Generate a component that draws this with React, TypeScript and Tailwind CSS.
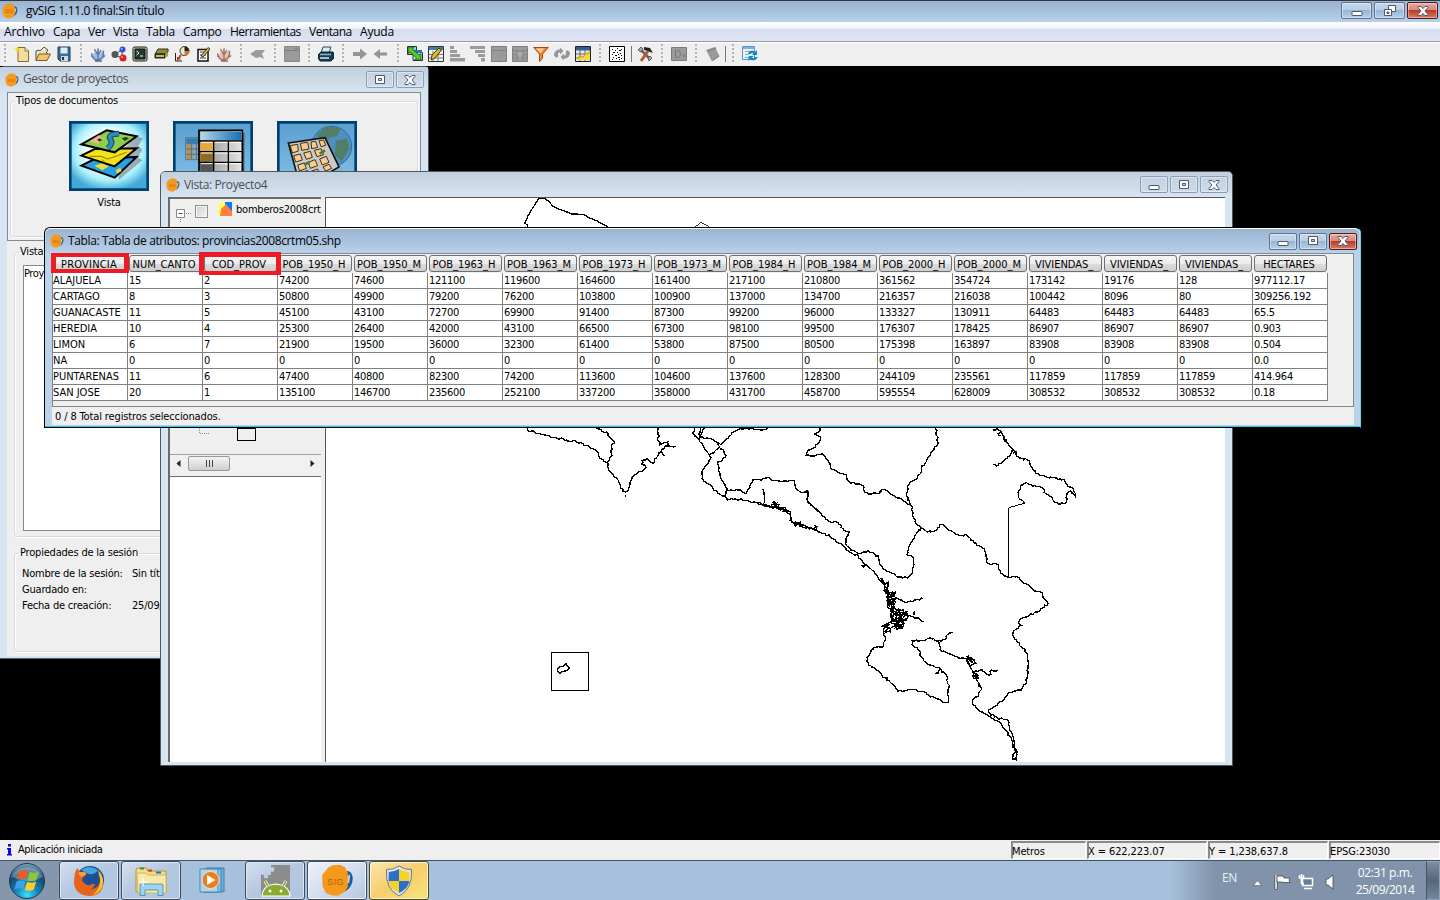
import React from "react";

/* ---------- data ---------- */

const COLUMNS = [
  "PROVINCIA", "NUM_CANTO", "COD_PROV", "POB_1950_H", "POB_1950_M", "POB_1963_H", "POB_1963_M", "POB_1973_H",
  "POB_1973_M", "POB_1984_H", "POB_1984_M", "POB_2000_H", "POB_2000_M", "VIVIENDAS_", "VIVIENDAS_", "VIVIENDAS_", "HECTARES",
];

const ROWS = [
  ["ALAJUELA", "15", "2", "74200", "74600", "121100", "119600", "164600", "161400", "217100", "210800", "361562", "354724", "173142", "19176", "128", "977112.17"],
  ["CARTAGO", "8", "3", "50800", "49900", "79200", "76200", "103800", "100900", "137000", "134700", "216357", "216038", "100442", "8096", "80", "309256.192"],
  ["GUANACASTE", "11", "5", "45100", "43100", "72700", "69900", "91400", "87300", "99200", "96000", "133327", "130911", "64483", "64483", "64483", "65.5"],
  ["HEREDIA", "10", "4", "25300", "26400", "42000", "43100", "66500", "67300", "98100", "99500", "176307", "178425", "86907", "86907", "86907", "0.903"],
  ["LIMON", "6", "7", "21900", "19500", "36000", "32300", "61400", "53800", "87500", "80500", "175398", "163897", "83908", "83908", "83908", "0.504"],
  ["NA", "0", "0", "0", "0", "0", "0", "0", "0", "0", "0", "0", "0", "0", "0", "0", "0.0"],
  ["PUNTARENAS", "11", "6", "47400", "40800", "82300", "74200", "113600", "104600", "137600", "128300", "244109", "235561", "117859", "117859", "117859", "414.964"],
  ["SAN JOSE", "20", "1", "135100", "146700", "235600", "252100", "337200", "358000", "431700", "458700", "595554", "628009", "308532", "308532", "308532", "0.18"],
];

const MENUS: [string, string][] = [
  ["Archivo", "w-[49px] tracking-[-0.15px]"], ["Capa", "w-[35px] tracking-[-0.3px]"], ["Ver", "w-[25px] tracking-[-0.4px]"],
  ["Vista", "w-[33px] tracking-[-0.3px]"], ["Tabla", "w-[37px] tracking-[-0.3px]"], ["Campo", "w-[47px] tracking-[-0.3px]"],
  ["Herramientas", "w-[79px] tracking-[-0.52px]"], ["Ventana", "w-[51px] tracking-[-0.5px]"], ["Ayuda", "w-[40px] tracking-[-0.2px]"],
];

/* ---------- map outlines, in thirds of a pixel ---------- */

const WEST = [
  "82,22 86,34 100,32 110,40 130,44 150,50 170,54 200,60 230,66 250,72 270,84 292,94 296,108 320,128 332,156 354,180 362,206 376,216 386,210 396,174 412,160 438,144 436,136 424,134 430,120 442,116 452,126 460,130 464,116 476,104 486,88 500,76 528,80",
  "290,24 306,34 320,36 332,56 342,64 334,84 336,106 320,128",
  "474,22 474,38 478,48 472,60 480,74 494,68 506,64 500,80 512,78",
  "484,92 490,106 496,106",
  "584,22 578,40 592,52 600,66 612,82 628,104 634,112 622,134 608,150 606,176 612,184 630,194 640,208 664,226 674,228",
  "602,22 596,40 604,52 622,54 640,60 656,68 662,74 680,56 700,36 722,26 770,28 784,30 804,26",
  "614,24 604,40 596,58",
  "656,68 656,86 634,100 628,104",
  "662,84 672,96 678,106 668,120 654,124 658,156 668,184 682,210 700,212 720,210 738,220 750,204 758,180 784,180 802,172 812,178 840,184 884,184 890,208 904,218 924,214 924,244 960,276",
  "684,208 674,228 682,240 704,236 740,242 776,252 800,258 830,264 856,272 870,282 874,306 900,312 930,322 960,336",
  "788,208 792,222 794,240 790,252", "820,244 832,256 824,262 844,268", "880,306 886,320 900,306 898,320", "944,316 946,332 952,318",
];

const EAST = [
  "60,22 56,36 44,42 62,52 56,68 40,84 26,90 18,106 44,108 66,100 78,116 90,130 94,148 110,154 140,164 144,182 166,192 188,196 194,216 214,222 236,220 248,208 262,212 276,224 300,234 310,244 334,258",
  "406,22 410,46 414,72 392,104 366,138 362,160 342,180 322,198 320,228 334,258 338,288 350,312 362,322 382,336 410,330 418,314 430,314 442,328 478,346 500,346 528,370 552,386 558,408 562,428 594,434 602,460 626,472",
  "362,322 348,342 336,366 326,380 320,404 338,410 342,434 338,454 322,474 290,470 270,456 250,446 238,430 234,408 204,392 190,396 176,400 150,386 138,374 140,352 148,336 132,332 116,308 90,306 60,278 22,246 24,216 0,218",
  "588,26 606,42 616,62 640,90 656,112 688,122 694,140 708,160 740,172 792,178 802,198 820,206 826,228 812,212 802,218 800,248 782,252 764,246 752,230 738,222 724,202 698,198 680,188 662,196 654,218 660,238 674,250",
  "580,30 590,26 604,34 594,42 604,48", "640,88 632,104 616,118 604,130 590,138 580,132", "634,92 652,96 640,100", "608,58 620,58 612,66",
  "626,472 652,470 664,482 684,494 702,512 728,520 734,538 744,552 726,564 718,574 688,586 660,598 654,606 664,616 654,626 640,634 638,646 652,666 676,688 682,712 684,744 680,784 664,810 628,818 612,838 588,858 566,870 570,880 598,898 606,894 624,902 630,932 640,950 642,980 652,996 648,1020 638,1018 642,1000 648,992",
  "0,318 44,330 90,350 128,376 150,398 176,408 190,428 212,446 236,476 254,494 262,508 262,540 274,562 276,592 292,612 306,620",
  "190,428 196,436 186,438 192,444",
  "284,536 304,540 320,548 344,540 370,536", "322,586 340,590 356,594 370,606", "342,586 346,572",
  "270,612 256,618 250,632 256,650 250,680 220,682 208,702 200,724 206,736 220,742 244,762 272,788 294,814 330,808 360,814 388,826 436,848 446,842 442,822 448,796 438,762 418,744 380,730 364,712 358,692 336,674 336,662 368,662 390,654 416,662 420,690 440,698 464,708 488,714 500,716 504,732 520,760 528,776 544,806 536,826 518,840 518,854 540,874 570,890 598,906 618,932 634,958 644,990 652,1004",
  "416,662 436,658 442,644 460,636", "498,708 514,714 528,730 512,738 500,716 518,728 506,704", "520,756 540,750 556,758 568,766 574,750 594,752", "420,746 414,760 404,760",
  "516,768 534,766 522,756 536,774 520,774 530,760",
];

/* tangle of channels at the delta */
const DELTA = [
  "240,476 256,500 262,520 264,552 276,580", "246,480 264,494 258,520 272,540 268,560", "260,520 286,520 270,532 290,536 268,548 284,552 270,566",
  "272,540 280,570 290,590 296,624", "270,576 300,570 288,584 322,580 300,592 318,596 280,604 312,610 284,616 308,624 274,622",
  "280,560 294,572 304,586 310,604 306,626", "272,580 278,600 264,612 248,618 270,626 254,634 272,638", "294,566 320,576 312,590 326,588 316,604",
  "266,510 270,530 278,518 274,556 266,540", "284,580 276,610 298,606 302,590 290,600 286,622 306,614",
];

const HARBOUR = ["776,250 800,256 826,262 850,270 872,278", "812,256 836,262 862,276", "818,246 838,254 828,266 856,264 850,274 868,272", "866,300 876,306 890,312 904,314"];

function rough(points: string, amount: number): string {
  const pts = points.split(" ").map((p) => p.split(",").map(Number));
  let seed = pts[0][0] * 31 + pts[0][1] * 17 + pts.length;
  const rnd = () => {
    seed = (seed * 1103515245 + 12345) % 2147483648;
    return seed / 2147483648 - 0.5;
  };
  const out: string[] = [pts[0].join(",")];
  for (let i = 1; i < pts.length; i++) {
    const [x0, y0] = pts[i - 1];
    const [x1, y1] = pts[i];
    const n = Math.max(1, Math.round(Math.hypot(x1 - x0, y1 - y0) / 6));
    for (let k = 1; k < n; k++) {
      const t = k / n;
      out.push(`${(x0 + (x1 - x0) * t + rnd() * amount).toFixed(1)},${(y0 + (y1 - y0) * t + rnd() * amount).toFixed(1)}`);
    }
    out.push(`${x1},${y1}`);
  }
  return out.join(" ");
}

function CostaRicaMap() {
  return (
    <svg width="899" height="565" viewBox="326 198 899 565" className="block" fill="none" stroke="#000" shapeRendering="crispEdges">
      <g strokeWidth="4">
        <g transform="translate(510 170) scale(.33333)">
          <polyline points="54,170 52,164 44,160 54,138 64,120 76,102 86,86 104,86 114,92 130,110 148,118 166,124 186,132 222,133 234,142 260,152 280,164 294,171" />
          <path d="M556 170l18-13 22 13" strokeWidth="3" stroke="#333" />
        </g>
        <g transform="translate(500 420) scale(.33333)">
          {WEST.map((p, i) => <polyline key={i} points={rough(p, 6)} />)}
          {HARBOUR.map((p, i) => <polyline key={i} points={rough(p, 9)} />)}
          <path d="M375 228h3" />
          <path d="M154 697h112v114h-112z" strokeWidth="3" />
          <path d="M176 742l14-4 8-7 4 6 5 4 0 6-8 5-12 3-6 5-6-3-3-9z" />
        </g>
        <g transform="translate(800 420) scale(.33333)">
          {EAST.map((p, i) => <polyline key={i} points={rough(p, 6)} />)}
          {DELTA.map((p, i) => <polyline key={i} points={rough(p, 12)} />)}
          <path d="M674 250l-48 13v210" strokeWidth="3" />
        </g>
      </g>
    </svg>
  );
}

/* ---------- icons ---------- */

function Logo({ className = "" }: { className?: string }) {
  return (
    <svg viewBox="0 0 16 16" className={`shrink-0 ${className}`}>
      <path d="M11.500 3.500c2-.5 3.500.5 3.800 2.500S15 12 11 13.500z" fill="#1d5f9e" />
      <path d="M12 6.500l2.200-1.500-.5 4-1.700 1z" fill="#c9d6e4" />
      <path d="M3.500 1.700L6 .5h3.500l2.300 1.200L13 4.500v6.500l-1.500 2.500-3 1.800H5.500L2.300 14 .8 10.800.5 5.500z" fill="#f5991d" />
      <text x="3" y="10" fontSize="4.500" fontFamily="Liberation Sans" fill="#b06410" textLength="8">SIG</text>
    </svg>
  );
}

const G = "#9b9b9b";

const ICONS: Record<string, React.ReactNode> = {
  new: <><path d="M4 1.500h7l3.500 3.500v10.500H4z" fill="#f3dc9c" stroke="#8a6a2c" /><path d="M11 1.500V5h3.500" fill="#fff7da" stroke="#8a6a2c" /><path d="M3 0l1 2.500 3 .5-3 1L3 7 2 4-1 3l3-.5z" fill="#f4e022" /></>,
  open: <><path d="M1 5l3-1 1 1 4-4 4 3-2 3 2 1-3 6.500H1z" fill="#e9e3d2" stroke="#5c5138" /><path d="M4 8h11.500L12 14.500H1z" fill="#f0c56c" stroke="#7a5c22" /></>,
  save: <><path d="M2 1h12v14H4l-2-2z" fill="#3c6d93" stroke="#1d3c58" /><path d="M4.500 1.500h7v6h-7z" fill="#dfeaf2" /><path d="M5 10h7v5H5z" fill="#cfd8df" /><path d="M6 11h2v3H6z" fill="#234" /></>,
  coral: <><path d="M1 7l3 1 1-5 2 4 1-6 2 6 4-4-1 5 3 1-3 4-4 3H6l-3-3z" fill="#a9bbdc" /><path d="M8 14C4 14 2 11 1.500 7.500M8 14V2.500M8 14c4-1 6-4 5.500-9M8 9L4.500 3M8 9l3-5M4 11L1 10M12 11l3-1M5 15h7" stroke="#5b74a6" strokeWidth="1.300" /></>,
  molecule: <><path d="M4 9l7-6v9z" stroke="#444" /><circle cx="11.500" cy="3.500" r="3" fill="#2b50c8" /><circle cx="4" cy="8.500" r="3.500" fill="#555" /><circle cx="12" cy="12" r="3.500" fill="#d92323" /><circle cx="11" cy="11" r="1" fill="#f6a0a0" /><circle cx="10.700" cy="2.700" r="1" fill="#a9c0f4" /></>,
  console: <><rect x="1" y="1" width="14" height="14" rx="1.500" fill="#bfc6bd" stroke="#222" /><path d="M3 3h10v10H3z" fill="#24382c" stroke="#111" /><path d="M4.500 5l2.500 2-2.500 2M8 10h3" stroke="#dfe" /></>,
  book: <><path d="M5 3h10v3l-3 2H2z" fill="#8d8c28" stroke="#333" /><path d="M2 8h10v4H2z" fill="#3d3c10" stroke="#222" /><path d="M3 10h8" stroke="#e8e49a" strokeWidth="1.500" /><path d="M12 8l3-2v4l-3 2z" fill="#a5a438" /></>,
  pie: <><path d="M1.500 7v8H8" stroke="#222" /><path d="M3 11h1.500v3.500H3z" fill="#d22" /><path d="M5 9h1.500v5.500H5z" fill="#e08020" /><circle cx="10.500" cy="5" r="4.500" fill="#f1ead6" stroke="#333" /><path d="M10.500 5V.5A4.500 4.500 0 0 1 15 5z" fill="#222" /><path d="M10.500 5l4.500 0a4.500 4.500 0 0 1-4.500 4.500z" fill="#e07a20" /><path d="M7 9l-3 4" stroke="#a33" strokeWidth="1.500" /></>,
  edit: <><path d="M3 3.500h10v11.500H3z" fill="#fff" stroke="#111" strokeWidth="1.500" /><path d="M5 6h4M5 9h6M5 12h6" stroke="#333" /><path d="M6 10l7-8.500 2 1.500-7 8z" fill="#e2b934" stroke="#111" strokeWidth=".8" /></>,
  coral2: <><path d="M1 7l3 1 1-5 2 4 1-6 2 6 4-4-1 5 3 1-3 4-4 3H6l-3-3z" fill="#e2c3b8" /><path d="M8 14C4 14 2 11 1.500 7.500M8 14V2.500M8 14c4-1 6-4 5.500-9M8 9L4.500 3M8 9l3-5M4 11L1 10M12 11l3-1M5 15h7" stroke="#a26c5e" strokeWidth="1.300" /></>,
  bird: <path d="M0 8l6-4h9l-3 4 2 5-4-2-4 1z" fill={G} />,
  win: <><path d="M.5.500h15v15H.5z" fill={G} stroke="#888" /><path d="M1 4.500h14M11 2.500h3" stroke="#7d7d7d" /></>,
  printer: <><path d="M5 1h8l-2 6H3z" fill="#d6ecf4" stroke="#345" /><path d="M0 9l3-3h12l1 3v3l-3 3H2l-2-3z" fill="#123c58" stroke="#0b2233" /><path d="M2 8.500h11" stroke="#8fb5c8" strokeWidth="1.500" /><path d="M2 12h9" stroke="#dfe9ee" strokeWidth="1.500" /></>,
  right: <path d="M1 6h7V2.500l7 5.500-7 5.500V10H1z" fill="#949494" />,
  left: <path d="M14 6.500H7V3L.5 8 7 13V9.500h7z" fill="#949494" />,
  link: <><path d="M.5.500h9v8h-9z" fill="#9fc7de" stroke="#234" /><path d="M6 6.500h9.500v8H6z" fill="#cfe0ea" stroke="#234" /><path d="M6 4h9v3H6z" fill="#2f78a8" /><path d="M1 1h6L5.500 3l6.500 6 2-1.500V14H7.500l2-2L3 6 1 7.500z" fill="#57c927" stroke="#174d0c" strokeWidth=".8" /></>,
  tedit: <><path d="M.5.500h15v15H.5z" fill="#f4f4f4" stroke="#333" /><path d="M1 1h14v3H1z" fill="#3f80ac" /><path d="M1 8.500h14M1 12h14M5 5v10M10 5v10" stroke="#777" /><path d="M3 14l1-5 7-7 2.500 2L7 12z" fill="#d8bd25" stroke="#463b08" /></>,
  asc: <path d="M1 0h4v3H1zM1 4h7v3H1zM1 8h10v3H1zM1 12h15v3.500H1z" fill={G} />,
  desc: <path d="M0 0h15v3H0zM5 4h10v3H5zM8 8h7v3H8zM11 12h4v3.500h-4z" fill={G} />,
  gt: <><path d="M.5.500h15v15H.5z" fill={G} stroke="#7f7f7f" /><path d="M1 4.500h14" stroke="#838383" /><path d="M5 9l3 3 5-6" stroke="#8d8d8d" /></>,
  gt2: <><path d="M.5.500h15v15H.5z" fill={G} stroke="#7f7f7f" /><path d="M1 4.500h14M1 8.500h14M1 12h14M5 5v10M11 5v10" stroke="#858585" /><path d="M8 12V7M5.500 9L8 6.500 10.500 9" stroke="#b0b0b0" strokeWidth="1.500" /></>,
  funnel: <><path d="M.7 1.500h14.600L9.500 8v4.500L6.500 15.500V8z" fill="#f18a3c" stroke="#a8480f" /><path d="M3 2.500h8L7.500 7z" fill="#ffd0a0" /></>,
  refreshg: <g fill="#979797"><path d="M0 9.500C0 5.500 3 3 6 3.500V1.500l3.500 3.500L6 8.500V6.500C4 6.300 3.500 8 4.500 10l-2 2z" /><path d="M16 6.500c0 4-3 6.500-6 6v2L6.500 11 10 7.500v2c2 .2 2.500-1.500 1.500-3.500l2-2z" /></g>,
  chart: <><path d="M.5.500h15v15H.5z" fill="#e9e9e9" stroke="#222" /><path d="M1 1h14v3.500H1z" fill="#2c5f96" /><path d="M1 8h14M1 12h14M5 4v11M10 4v11" stroke="#666" /><path d="M2 13l4-2 2 1 3-5 2 2 2-4v9H2z" fill="#f2dc36" /><path d="M2 12l4-2 2 1 3-4 2 1 2-4" stroke="#e08a20" /></>,
  pattern: <><path d="M.5.500h15v15H.5z" fill="#fff" stroke="#000" /><path d="M3 3h1v1H3zM6 4h1v1H6zM8 2h1v1H8zM10 4h2v1h-2zM12 3h1v1h-1zM4 6h2v1H4zM8 6h1v1H8zM11 7h1v1h-1zM3 8h1v1H3zM6 9h2v1H6zM9 8h1v1H9zM12 9h1v1h-1zM4 11h1v1H4zM7 12h1v1H7zM9 11h2v1H9zM12 12h1v1h-1zM3 13h1v1H3zM10 13h1v1h-1z" fill="#000" /></>,
  tools: <><path d="M3 3l10 10" stroke="#666" strokeWidth="2.500" /><path d="M1 4l3-3 2 2-2 3zM12 15l3-3-2-2-2 2z" fill="#aaa" stroke="#333" strokeWidth=".7" /><path d="M11 5L4 15" stroke="#b4592a" strokeWidth="3" /><path d="M7 1l6 1 3 5-3-1-2-1-4-1z" fill="#222" /></>,
  dbox: <><path d="M.5 1.500h15v13H.5z" fill={G} stroke="#7b7b7b" /><path d="M4.500 4.500h2q3 0 3 3.500t-3 3.500h-2zM11 9h3l-2 3" stroke="#777" /></>,
  eraser: <><path d="M1 4l9-3 4.500 9L7 15.500z" fill="#9a9a9a" /><path d="M3 5l8-3M8 14l6-4" stroke="#858585" strokeWidth="1.500" /></>,
  sync: <><path d="M.5.500h12v13H.5z" fill="#e9f1fa" stroke="#5b94c8" /><path d="M1 1h11v2H1z" fill="#7fb0de" /><path d="M3 5.500h7M3 8.500h4M3 11.500h3" stroke="#8cb88c" /><path d="M6 8c1-4 5-4 7-2l2-2v5h-5l1.500-1.500C10 6.500 9 7 8.500 8zM15.500 11c-1 4-5 4-7 2l-2 2v-5h5L10 11.500c1.500 1 2.500.5 3-.5z" fill="#1289c4" /></>,
};

const TOOLBAR = [
  "|", "new", "open", "save", "|", "coral", "molecule", "console", "book", "pie", "edit", "coral2", "|", "bird", "|", "win", "|", "printer",
  "|", "right", "left", "|", "link", "tedit", "asc", "desc", "gt", "gt2", "funnel", "refreshg", "chart", "|", "pattern", "/", "tools",
  "|", "dbox", "|", "eraser", "/s", "|", "sync",
];

function Toolbar() {
  return (
    <div className="-ml-[1.5px] flex h-6 items-center border-t border-white bg-[#efefef] pb-px">
      {TOOLBAR.map((name, i) => {
        if (name === "|")
          return (
            <span key={i} className="flex w-[13px] justify-center">
              <svg width="2" height="20"><path d="M1 0v20" stroke="#b4b4b4" strokeWidth="2" strokeDasharray="2 2" /></svg>
            </span>
          );
        if (name[0] === "/")
          return (
            <span key={i} className={name === "/" ? "flex w-[7px] justify-center" : "flex w-[3px] justify-center"}>
              <span className="h-4 w-px bg-[#777]" />
            </span>
          );
        return (
          <span key={i} className="flex w-[21px] justify-center">
            <svg width="16" height="16" viewBox="0 0 16 16" fill="none">{ICONS[name]}</svg>
          </span>
        );
      })}
    </div>
  );
}

/* ---------- window buttons ---------- */

function Glyph({ kind }: { kind: string }) {
  return (
    <svg width="14" height="12" viewBox="0 0 14 12" fill="#fff" stroke="#50566b">
      {kind === "min" && <rect x="2" y="6.500" width="10" height="4" rx=".5" />}
      {kind === "max" && <path d="M2.500 1.500h9v8h-9zM5.500 4.500h3v2h-3z" fillRule="evenodd" />}
      {kind === "restore" && <><path d="M5.500.500h7v6h-7z" /><path d="M1.500 4.500h7v6h-7zM4 7h2v1.500H4z" fillRule="evenodd" /></>}
      {kind === "close" && <path d="M2 1.500h3l2 2 2-2h3v1L9 6l3 3.500v1H9l-2-2-2 2H2v-1L5 6 2 2.500z" />}
    </svg>
  );
}

function WinButton({ kind, tone, wide }: { kind: string; tone: string; wide?: boolean }) {
  const tones: Record<string, string> = {
    off: "border-[#8e9db5] bg-gradient-to-b from-[#c3d2e2] to-[#ccdbe9]",
    on: "border-[#5f7390] bg-[linear-gradient(#c5d8eb_0%,#b7cde4_48%,#98b6d3_50%,#b4cfe8_100%)]",
    red: "border-[#4d1a22] bg-[linear-gradient(#e9aa9e_0%,#db8777_48%,#b93d25_50%,#d77a62_100%)]",
  };
  return (
    <span className={`flex items-center justify-center rounded-[2px] border shadow-[inset_0_0_0_1px_rgba(255,255,255,0.4)] ${wide ? "h-[17px] w-[31px]" : "h-[17px] w-7"} ${tones[tone]}`}>
      <Glyph kind={kind} />
    </span>
  );
}

const SEGOE = "font-['Open_Sans',sans-serif] text-[12px]";
const TAHOMA = "font-['DejaVu_Sans_Condensed','DejaVu_Sans',sans-serif] text-[11px]";

function GroupBox({ title, className, children }: { title: string; className: string; children?: React.ReactNode }) {
  return (
    <fieldset className={`min-w-0 rounded-[3px] border border-[#cfdce8] shadow-[inset_1px_1px_0_#fff,1px_1px_0_#fff] ${className}`}>
      <legend className="ml-[4px] h-3 px-px leading-3 tracking-[-0.2px] whitespace-nowrap">{title}</legend>
      {children}
    </fieldset>
  );
}

/* ---------- project manager ---------- */

function LayersPicture() {
  return (
    <svg width="80" height="70" viewBox="0 0 240 210" className="block">
      <defs>
        <radialGradient id="lg" cy=".42" r=".62"><stop offset=".45" stopColor="#fff" /><stop offset=".75" stopColor="#a6f0fa" /><stop offset="1" stopColor="#43a9d8" /></radialGradient>
      </defs>
      <path d="M0 0h240v210H0z" fill="#00406f" />
      <path d="M8 8h224v194H8z" fill="url(#lg)" />
      <path d="M150 176l70-58-14-10 14-22-12-12 14-22-20-6-60 60z" fill="#667" opacity=".5" />
      <path d="M37 134l40-20 126-6-66 62z" fill="#27a0e4" stroke="#000" strokeWidth="6" />
      <path d="M76 134l24-8 20 10-20 12zM140 148l14-8 4 10-14 8z" fill="#e8dc36" />
      <path d="M37 104l40-20 126-2-66 54z" fill="#f3e11c" stroke="#000" strokeWidth="6" />
      <path d="M62 106l34 0 20 8 30-10 26-10M100 116l10 10" stroke="#8a7a08" strokeWidth="3" fill="none" />
      <path d="M37 70l76-42 90 18-66 48z" fill="#8bd04c" stroke="#000" strokeWidth="6" />
      <path d="M62 60l28-18 12 12-14 14z" fill="#f0b98c" />
      <path d="M84 56l8-4 8 4-8 6zM158 52l12-4 10 4-12 8z" fill="#2d3a20" />
      <path d="M150 38q-36 2-26 16t-8 28" stroke="#123f66" strokeWidth="17" fill="none" />
      <path d="M150 38q-36 2-26 16t-8 28" stroke="#2b8cc4" strokeWidth="11" fill="none" />
    </svg>
  );
}

function TablePicture() {
  return (
    <svg width="80" height="70" viewBox="0 0 240 210" className="block">
      <defs>
        <linearGradient id="tg" x2="0" y2="1"><stop stopColor="#5a9fd0" /><stop offset="1" stopColor="#87c2e8" /></linearGradient>
        <linearGradient id="th"><stop stopColor="#b8d6ea" /><stop offset="1" stopColor="#1272b4" /></linearGradient>
        <linearGradient id="tc"><stop stopColor="#8c8c8c" /><stop offset="1" stopColor="#e4e4e4" /></linearGradient>
      </defs>
      <path d="M0 0h240v210H0z" fill="#00406f" />
      <path d="M8 8h224v194H8z" fill="url(#tg)" />
      <path d="M38 50h46v66H38z" fill="#8fa6b4" stroke="#5d7688" strokeWidth="3" />
      <path d="M40 52h44v14H40z" fill="#2d80b8" />
      <path d="M42 70h12v44H42z" fill="#b99245" />
      <path d="M40 68h40M40 84h40M40 100h40M56 68v46M70 68v46" stroke="#4f7186" strokeWidth="3" />
      <path d="M86 36h128v174H86z" fill="#345b76" />
      <path d="M78 28h130v190H78z" fill="url(#tc)" stroke="#000" strokeWidth="5" />
      <path d="M82 32h122v26H82z" fill="url(#th)" />
      <path d="M82 64h38v26H82z" fill="#e6a93c" /><path d="M82 94h38v28H82z" fill="#8d6d22" /><path d="M82 126h38v30H82z" fill="#555" />
      <path d="M78 60h130M78 92h130M78 124h130M122 60v120M166 60v120" stroke="#000" strokeWidth="4" />
      <path d="M84 64h34M126 64h38M170 64h34M84 96h34M126 96h38M170 96h34M84 128h34M126 128h38M170 128h34" stroke="#fff" strokeWidth="3" />
    </svg>
  );
}

function MapPicture() {
  return (
    <svg width="80" height="70" viewBox="0 0 240 210" className="block">
      <path d="M0 0h240v210H0z" fill="#00406f" />
      <path d="M8 8h224v194H8z" fill="url(#tg)" />
      <circle cx="164" cy="76" r="60" fill="#4f8fc0" stroke="#2f6c9c" strokeWidth="3" />
      <path d="M120 40l30-24 40 6-10 24-24 4-10 20-20-6zM176 60l34-8 8 30-24 40-20-20z" fill="#4f7f68" />
      <path d="M34 66l110-16 42 88-114 66z" fill="#c9c9c6" stroke="#111" strokeWidth="5" />
      <g fill="#fbcb8c" stroke="#3a2f20" strokeWidth="3">
        <path d="M40 74l22-4 2 20-18 6zM70 67l22-3 4 20-22 4zM102 63l14-2 6 18-18 4zM126 59l14-2 6 16-14 4zM50 104l20-5 6 18-20 6zM80 96l20-5 6 18-18 6zM112 88l20-5 8 18-20 6zM62 132l20-6 6 16-20 8zM94 124l20-8 8 18-22 8zM128 114l20-8 8 18-20 8zM104 150l18-6 6 14-20 8zM138 138l18-8 8 12-18 8zM72 156l20-8 6 14-20 8z" />
      </g>
      <path d="M84 130l14-6M128 98l16-10" stroke="#4d7a33" strokeWidth="8" />
    </svg>
  );
}

function ProjectManager() {
  return (
    <section className={`absolute top-0 left-0 flex h-[593px] w-[429px] flex-col rounded-t-[5px] border-t border-r border-b border-[#50575f] bg-[#d7e4f1] pb-[2px] text-black ${TAHOMA}`}>
      <header className="flex h-[25px] shrink-0 items-center bg-gradient-to-b from-[#c2cfdc] to-[#d8e5f1] pr-[4px] pl-[5px]">
        <Logo className="size-[14px]" />
        <span className={`ml-1 flex-1 pb-px tracking-[-0.42px] text-[#4b4f55] ${SEGOE}`}>Gestor de proyectos</span>
        <div className="flex gap-0.5"><WinButton kind="max" tone="off" /><WinButton kind="close" tone="off" /></div>
      </header>
      <div className="mr-[7px] ml-[7px] flex min-h-0 flex-1 flex-col border-l border-[#efefef] bg-[#efefef]">
        <div className="-ml-px h-[149px] shrink-0 border border-[#828790] px-[2px] pt-[2px]">
          <GroupBox title="Tipos de documentos" className="h-[142px]">
            <div className="ml-[58px] flex gap-6 pt-[14px]">
              <div className="flex flex-col items-center">
                <LayersPicture />
                <span className="mt-1 tracking-[-0.2px]">Vista</span>
              </div>
              <TablePicture />
              <MapPicture />
            </div>
          </GroupBox>
        </div>
        <div className="mt-[5px] flex-1 pr-1 pl-[6px]">
          <GroupBox title="Vista" className="h-[291px]">
            <div className="mt-[7px] ml-[8px] h-[266px] w-[380px] border border-[#828790] bg-white tracking-[-0.4px]">Proyecto4</div>
          </GroupBox>
          <GroupBox title="Propiedades de la sesión" className="mt-[10px] h-[105px]">
            <dl className="mt-[7px] ml-[7px] grid grid-cols-[110px_1fr] leading-4 tracking-[-0.2px]">
              <dt>Nombre de la sesión:</dt><dd>Sin título</dd>
              <dt>Guardado en:</dt><dd />
              <dt>Fecha de creación:</dt><dd>25/09/2014</dd>
            </dl>
          </GroupBox>
        </div>
      </div>
    </section>
  );
}

/* ---------- view window ---------- */

function ViewWindow() {
  return (
    <section className="absolute top-[105px] left-[160px] flex h-[595px] w-[1073px] flex-col rounded-t-[5px] border border-[#50575f] bg-[#d7e4f1]">
      <header className="flex h-[25px] shrink-0 items-center rounded-t-[4px] bg-gradient-to-b from-[#c2cfdc] to-[#d8e5f1] pr-[4px] pl-[5px]">
        <Logo className="size-[14px]" />
        <span className={`ml-1 flex-1 tracking-[-0.38px] text-[#4b4f55] ${SEGOE}`}>Vista: Proyecto4</span>
        <div className="flex gap-0.5"><WinButton kind="min" tone="off" /><WinButton kind="max" tone="off" /><WinButton kind="close" tone="off" /></div>
      </header>
      <div className="mr-[7px] ml-[7px] flex h-[565px] bg-[#efefef]">
        <div className="flex w-[153px] shrink-0 flex-col border-t-2 border-l-2 border-[#6b6b6b]">
          <div className={`flex h-[256px] shrink-0 flex-col justify-between bg-[#efefef] ${TAHOMA}`}>
            <div className="flex h-[24px] items-center pl-[6px]">
              <svg width="19" height="24" viewBox="0 0 19 24" fill="none" className="shrink-0"><path d="M.5 10.500h8v8h-8z" fill="#fff" stroke="#888" /><path d="M2.500 14.500h4" stroke="#34508c" /><path d="M10 14.500h6M4.500 20v4" stroke="#888" strokeDasharray="1 1" /></svg>
              <span className="size-[13px] shrink-0 border border-[#8e8f8f] bg-gradient-to-br from-[#cbcfd5] to-[#f6f6f6] shadow-[inset_0_0_0_1px_#f4f4f4]" />
              <svg width="14" height="14" viewBox="0 0 14 14" className="mb-1 ml-[10px] shrink-0"><path d="M0 0h14v14H0z" fill="#ffff73" /><path d="M7 0h7v14H7z" fill="#0080ff" /><path d="M2 14l1-7 5-5 3 4 3 3v5z" fill="#ff7f3f" /></svg>
              <span className="ml-1 w-[86px] overflow-hidden pb-[2px] tracking-[-0.22px] whitespace-nowrap">bomberos2008crt</span>
            </div>
            <div className="flex h-[27px] items-start border-b border-[#a0a0a0] pl-[28px]">
              <svg width="12" height="9"><path d="M1.500 0v5.500H12" fill="none" stroke="#888" strokeDasharray="1 1" /></svg>
              <span className="ml-[27px] h-[13px] w-[19px] border border-black" />
            </div>
          </div>
          <div className="flex h-[17px] shrink-0 items-center justify-between bg-[#f1f1f1] px-[6px]">
            <svg width="5" height="8"><path d="M4.500 0v7L.5 3.500z" fill="#222" /></svg>
            <span className="mr-auto ml-[7px] flex h-[15px] w-[42px] items-center justify-center gap-[2px] rounded-[2px] border border-[#979797] bg-gradient-to-b from-[#f4f4f4] to-[#cfcfcf]">
              <i className="h-[7px] w-px bg-[#444]" /><i className="h-[7px] w-px bg-[#444]" /><i className="h-[7px] w-px bg-[#444]" />
            </span>
            <svg width="5" height="8"><path d="M.5 0v7l4-3.500z" fill="#222" /></svg>
          </div>
          <div className="mt-[4px] flex-1 border-t border-[#6b6b6b] bg-white" />
        </div>
        <div className="ml-[4px] flex-1 overflow-hidden border-t border-l border-[#555] bg-white"><CostaRicaMap /></div>
      </div>
    </section>
  );
}

/* ---------- attribute table ---------- */

function AttributeTable() {
  return (
    <section className="absolute top-[161px] left-[44px] h-[201px] w-[1317px] rounded-t-[6px] border border-black border-r-[#55d8ea] bg-[#bad2ea] shadow-[inset_0_-1px_0_#2fc8e8,inset_0_1px_0_#fff]">
      <header className="mx-px mt-px flex h-[24px] items-center rounded-t-[5px] bg-gradient-to-b from-[#9ab4d0] to-[#b9d1ea] pr-[2px] pl-[4px]">
        <Logo className="size-[14px]" />
        <span className={`ml-1 flex-1 tracking-[-0.38px] text-black ${SEGOE}`}>Tabla: Tabla de atributos: provincias2008crtm05.shp</span>
        <div className="flex gap-0.5"><WinButton kind="min" tone="on" /><WinButton kind="max" tone="on" /><WinButton kind="close" tone="red" /></div>
      </header>
      <div className={`mr-[6px] ml-[7px] flex h-[172px] flex-col bg-[#efefef] text-black ${TAHOMA}`}>
        <div className="h-[154px] border border-[#828790] border-l-[#808080]">
          <div className="flex h-[19px] pt-px">
            {COLUMNS.map((c, i) => (
              <div key={i} className="w-[75px] px-px">
                <div className={`flex h-[17px] items-center justify-center rounded-[3px] border border-[#6f6f6f] bg-[linear-gradient(#f4f4f4_0%,#ececec_50%,#dcdcdc_52%,#cecece_100%)] pt-[2px] leading-none whitespace-nowrap ${c === "PROVINCIA" ? "pr-[3px] tracking-[0.2px]" : "pr-[3px] tracking-[-0.03px]"}`}>{c}</div>
              </div>
            ))}
          </div>
          {ROWS.map((r) => (
            <div key={r[0]} className="flex h-4">
              {r.map((v, i) => (
                <div key={i} className={`w-[75px] overflow-hidden border-r border-b border-[#808080] bg-white leading-[15px] whitespace-nowrap ${i ? "pl-px tracking-[-0.29px]" : "tracking-[-0.02px]"}`}>{v}</div>
              ))}
            </div>
          ))}
        </div>
        <div className="pt-[2px] pl-[3px] leading-4 tracking-[-0.13px]">0 / 8 Total registros seleccionados.</div>
      </div>
      <span className="absolute top-[25px] left-[6px] h-5 w-[78px] border-x-[5px] border-y-4 border-[#ed1c24]" />
      <span className="absolute top-6 left-[154px] h-[23px] w-[82px] border-x-[5px] border-t-[5px] border-b-4 border-[#ed1c24]" />
    </section>
  );
}

/* ---------- taskbar ---------- */

function TaskButton({ children, tone }: { children: React.ReactNode; tone?: string }) {
  const look =
    tone === "plain" ? "border-transparent"
      : tone === "gold" ? "border-[#4c4a36] bg-gradient-to-br from-[#fbe7ae] via-[#f7cd6c] to-[#f5e579] shadow-[inset_0_0_0_1px_#fff3c0]"
        : tone === "light" ? "border-[#3c4c5e] bg-gradient-to-br from-[#eef2fa] via-[#d3deef] to-[#b3c8e3] shadow-[inset_0_0_0_1px_#f3f7fc]"
          : "border-[#3c4c5e] bg-gradient-to-br from-[#d5dfee] via-[#b3c7e0] to-[#b0c5e1] shadow-[inset_0_0_0_1px_#dbe6f3]";
  return <div className={`flex h-[39px] w-[60px] items-center justify-center rounded-[3px] border ${look}`}>{children}</div>;
}

function Taskbar() {
  return (
    <footer className="flex h-10 border-t border-[#42566b] bg-[linear-gradient(90deg,#8597ad_0px,#8597ad_58px,#a7c0dc_62px,#a7c0dc_1170px,#8093aa_1215px,#8093aa_1440px)]">
      <div className="flex w-[59px] items-center pl-2">
        <svg width="38" height="38" viewBox="0 0 38 38">
          <defs><radialGradient id="orb" cx=".5" cy=".9" r=".9"><stop stopColor="#37e0ff" /><stop offset=".35" stopColor="#1486b8" /><stop offset=".7" stopColor="#174a70" /><stop offset="1" stopColor="#7fa6c0" /></radialGradient></defs>
          <circle cx="19" cy="19" r="17.500" fill="url(#orb)" stroke="#1d3951" />
          <path d="M4 15a15.500 13 0 0 1 30 0q-8 5-15 4T4 15z" fill="#fff" opacity=".28" />
          <path d="M11 9.500q4.500-2.500 9-.3l-2 8.300q-4.500-2-9 .5z" fill="#ef5a24" />
          <path d="M21.500 9.800q4 2.200 9.500-.3l-2.500 8.500q-4.500 2.500-9 .3z" fill="#8cc63f" />
          <path d="M8.500 19.500q4.500-2.500 9-.3l-2.200 8q-4.300-2-8.800.5z" fill="#38a3e8" />
          <path d="M19 19.800q4.500 2.200 9.200-.3l-2.400 8q-4.500 2.500-9 .3z" fill="#ffcc2a" />
        </svg>
      </div>
      <div className="flex gap-0.5">
        <TaskButton>
          <svg width="32" height="32" viewBox="0 0 32 32">
            <circle cx="17" cy="15" r="14" fill="#1d4f94" /><path d="M8 5q8-6 17 0-3 5-9 4z" fill="#41a8dc" />
            <path d="M2 8q1-4 3-5 0 3 3 4 4-1 6 1-1 3-4 4l-1 3q3 6 8 5 3-2 5-1-1 5-6 5 9 1 11-8 0-5-2-8 6 4 5 11-1 12-14 12Q2 30 1 18q0-5 1-10z" fill="#e8641b" />
            <path d="M25 5q5 5 5 12-1 10-10 13 9-8 7-17z" fill="#fcc827" /><path d="M5 8q3-2 8 0-1 3-5 4z" fill="#f9a13a" />
          </svg>
        </TaskButton>
        <TaskButton>
          <svg width="34" height="32" viewBox="0 0 34 32">
            <path d="M2 5q0-2 2-2h8l2 3h18v21H2z" fill="#f2dd8c" stroke="#b9953f" /><path d="M3 8h9l2 2h18v18H4z" fill="#f8e9a8" stroke="#d3b660" />
            <path d="M6 3.500h4" stroke="#2d9b3f" strokeWidth="2" /><path d="M14 5.500h4" stroke="#d2402c" strokeWidth="2" /><path d="M22 7.500h5" stroke="#2d6fc0" strokeWidth="2" />
            <path d="M6 30.500V20q0-1 1-1h21q1 0 1 1v10.500h-5V25H11v5.500z" fill="#9fd3ee" stroke="#3c88b8" strokeWidth=".8" /><path d="M9 13v8M5 17h8" stroke="#fff" strokeWidth="1.200" />
          </svg>
        </TaskButton>
        <TaskButton tone="plain">
          <svg width="30" height="28" viewBox="0 0 30 28">
            <path d="M4 23h24l-3 3H6z" fill="#7c93ad" opacity=".6" /><path d="M8 1h18v23H8z" fill="#6fb3dc" stroke="#3e7ea8" /><path d="M5 2h18v23H5z" fill="#8fc8ea" stroke="#3e7ea8" /><path d="M2 2h18v23H2z" fill="#a8d6f0" stroke="#4a8ab4" />
            <circle cx="12.500" cy="13" r="8.500" fill="#f17a1c" stroke="#fff" strokeWidth=".6" /><path d="M9 8l8.500 5L9 18z" fill="#fff" />
          </svg>
        </TaskButton>
        <TaskButton>
          <svg width="32" height="32" viewBox="0 0 32 32">
            <path d="M2 9.500V31h29V0H12v2.500q2-1 3 .5t0 3-3 .5V10H9q1 3.500-2 3.500T5 10z" fill="#8c8c8c" />
            <path d="M3 31q1-11 13.500-12Q30 20 31 31z" fill="#8aab2f" stroke="#fff" strokeWidth="1.200" /><path d="M9 21l-3-5M24 21l3-5" stroke="#fff" strokeWidth="3" /><path d="M9 21l-3-5M24 21l3-5" stroke="#8aab2f" strokeWidth="1.500" />
            <circle cx="11" cy="26" r="1.500" fill="#fff" /><circle cx="22" cy="26" r="1.500" fill="#fff" />
          </svg>
        </TaskButton>
        <TaskButton tone="light"><Logo className="size-[33px]" /></TaskButton>
        <TaskButton tone="gold">
          <svg width="28" height="32" viewBox="0 0 28 32">
            <path d="M14 1q6 4 12.500 3.500Q28 24 14 31 0 24 1.500 4.500 8 5 14 1z" fill="#dfe5ea" stroke="#6d7680" />
            <path d="M14 4v12H3.500L3.800 7Q9 7 14 4z" fill="#2c6fcb" /><path d="M14 4v12h10.500L24.200 7Q19 7 14 4z" fill="#f5d226" />
            <path d="M14 28V16H3.500Q5 24 14 28z" fill="#f5d226" /><path d="M14 28V16h10.500Q23 24 14 28z" fill="#2c6fcb" />
          </svg>
        </TaskButton>
      </div>
      <div className={`ml-auto flex items-center text-white ${SEGOE}`}>
        <span className="mr-[16px] mb-[6px] tracking-[-0.4px] text-[#e9eef4]">EN</span>
        <svg width="9" height="6" className="mt-1 mr-[12px]"><path d="M4.500 .5L8.500 5.500h-8z" fill="#fff" stroke="#445" strokeWidth=".5" /></svg>
        <svg width="17" height="16" viewBox="0 0 17 16" className="mt-[2px] mr-[7px]"><path d="M2 1v14.500" stroke="#3a4656" strokeWidth="3" /><path d="M2 1v14" stroke="#fff" strokeWidth="1.500" /><path d="M3 2h6l1 2h6l-1 2 1 2.500H9L8 8H3z" fill="#fff" stroke="#3a4656" strokeWidth=".8" /></svg>
        <svg width="16" height="16" viewBox="0 0 16 16" fill="none" className="mt-[2px] mr-[11px]"><path d="M4.500 4.500h10v7h-10z" fill="#66809a" stroke="#fff" strokeWidth="1.500" /><path d="M6 14.500h8M1.500 1v3h4V1M3.500 0v9.500H6" stroke="#fff" strokeWidth="1.500" /></svg>
        <svg width="9" height="16" viewBox="0 0 9 16" className="mt-[2px] mr-[20px]"><path d="M1 5h2l5-4v14l-5-4H1z" fill="#fff" stroke="#3a4656" strokeWidth=".8" /></svg>
        <div className="mr-[10px] w-[62px] text-center leading-[17px] tracking-[-0.5px] whitespace-nowrap">
          <div className="tracking-[-0.4px]">02:31 p.m.</div><div>25/09/2014</div>
        </div>
        <div className="h-[39px] w-[14px] border border-[#8fa3b8] border-l-[#46566a] bg-gradient-to-b from-[#7d8ea3] via-[#566779] to-[#73869c]" />
      </div>
    </footer>
  );
}

const STATUS: [string, string][] = [["Metros", "w-[75px]"], ["X = 622,223.07", "w-[120px]"], ["Y = 1,238,637.8", "w-[120px]"], ["EPSG:23030", "w-[111px]"]];

export default function App() {
  return (
    <div className="flex h-[900px] w-[1440px] flex-col overflow-hidden bg-[#efefef] text-black">
      <header className="flex h-[22px] shrink-0 items-center border-t border-[#33363c] bg-gradient-to-b from-[#98b3d1] to-[#b8d0ea] pr-[2px] pb-[2px] pl-[2px]">
        <Logo className="size-4" />
        <span className={`ml-2 flex-1 tracking-[-0.33px] ${SEGOE}`}>gvSIG 1.11.0 final:Sin título</span>
        <div className="flex gap-0.5"><WinButton kind="min" tone="on" wide /><WinButton kind="restore" tone="on" wide /><WinButton kind="close" tone="red" wide /></div>
      </header>
      <nav className={`flex h-5 shrink-0 items-center border-b border-[#989ba3] bg-[linear-gradient(#ffffff_0%,#eef1f9_35%,#d5dcee_36%,#e0e5f4_100%)] pl-1 whitespace-nowrap ${SEGOE}`}>
        {MENUS.map(([m, w]) => <span key={m} className={w}>{m}</span>)}
      </nav>
      <Toolbar />
      <main className="relative h-[774px] shrink-0 overflow-hidden bg-black">
        <ProjectManager />
        <ViewWindow />
        <AttributeTable />
      </main>
      <div className={`flex h-5 shrink-0 items-center bg-[#efefef] ${TAHOMA}`}>
        <svg width="6" height="12" viewBox="0 0 6 12" className="ml-[6px]"><path d="M2 0h3v2.500H2zM1 4h4v6h1v1.500H1V10h1V5.500H1z" fill="#0a0ae0" /></svg>
        <span className="ml-[6px] flex-1 pt-px tracking-[-0.4px]">Aplicación iniciada</span>
        {STATUS.map(([s, w]) => (
          <span key={s} className={`mr-px h-[18px] border-t-2 border-l-2 border-r border-b border-[#8a8a8a] border-r-white border-b-white leading-[17px] whitespace-nowrap last:mr-0 ${s === "Metros" ? "tracking-[-0.15px]" : "tracking-[-0.1px]"} ${w}`}><span className="-ml-px">{s}</span></span>
        ))}
      </div>
      <Taskbar />
    </div>
  );
}
